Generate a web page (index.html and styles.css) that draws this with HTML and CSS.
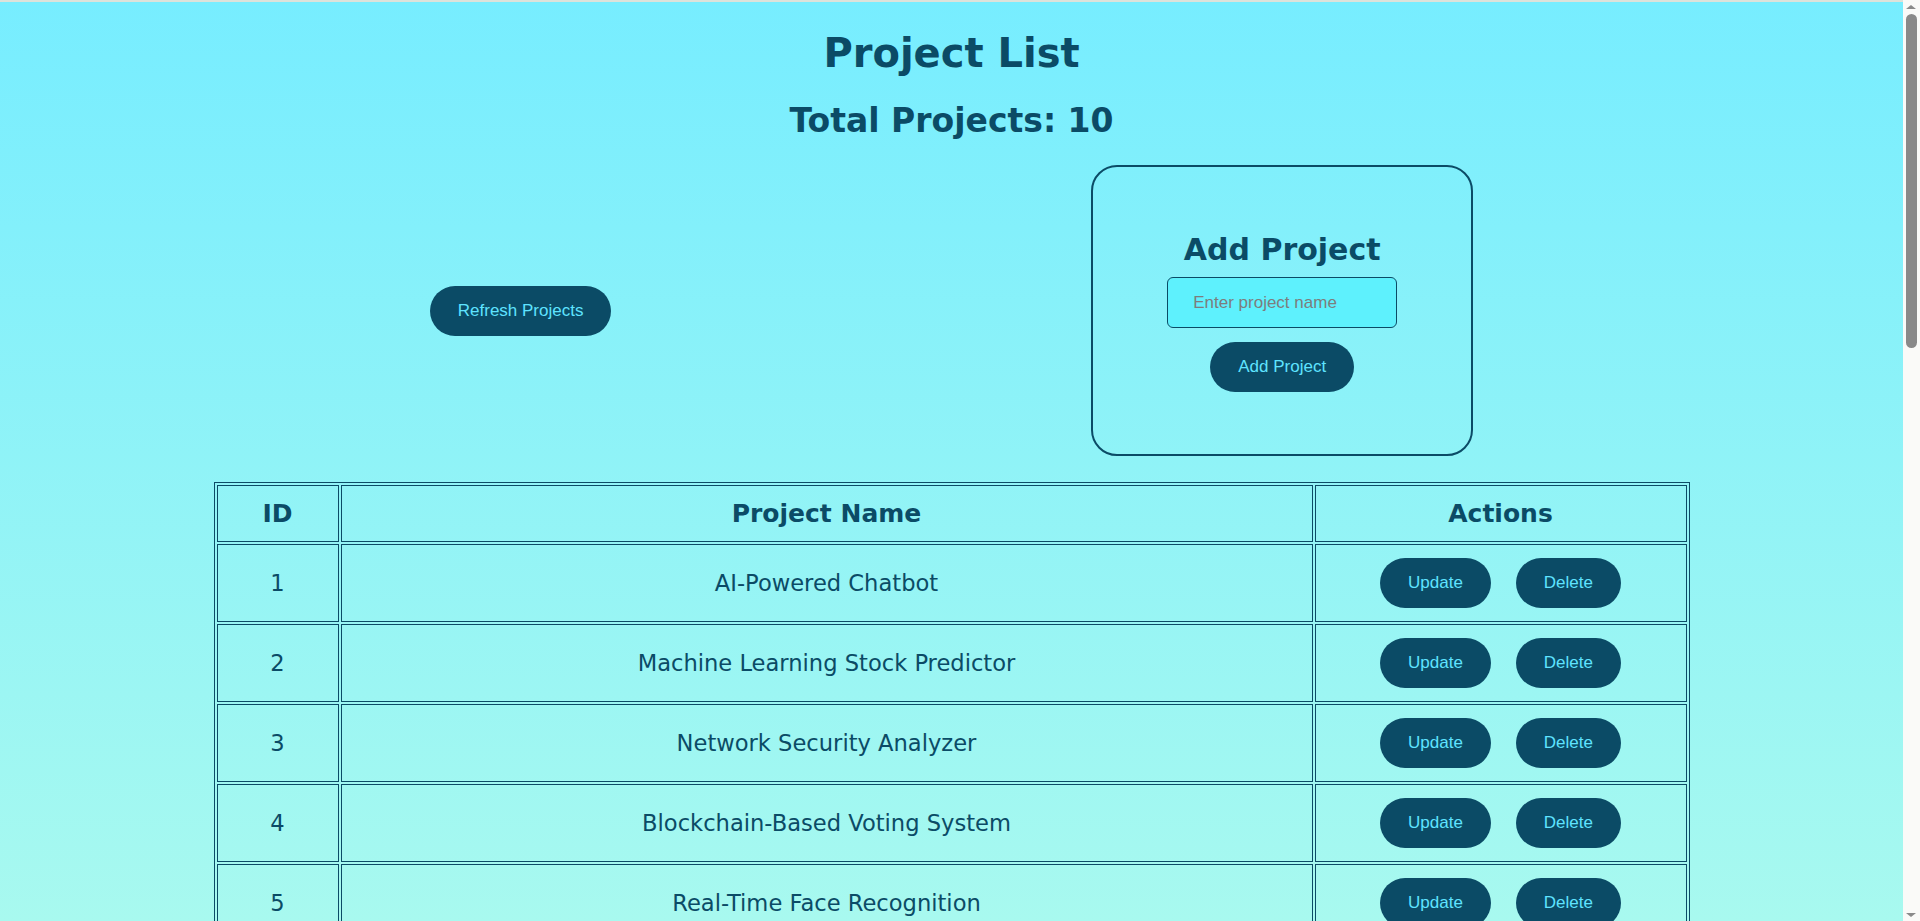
FILE: index.html
```html
<!DOCTYPE html>
<html lang="en">
<head>
<meta charset="utf-8">
<title>Project List</title>
<link rel="stylesheet" href="styles.css">
</head>
<body>
<div class="page">
  <h1 class="title">Project List</h1>
  <h2 class="total">Total Projects: 10</h2>

  <div class="toolbar">
    <button class="btn">Refresh Projects</button>
    <div class="card">
      <h2 class="card-title">Add Project</h2>
      <input class="text-input" type="text" placeholder="Enter project name">
      <button class="btn">Add Project</button>
    </div>
  </div>

  <table class="projects">
    <colgroup>
      <col class="col-id">
      <col class="col-name">
      <col class="col-actions">
    </colgroup>
    <thead>
      <tr><th>ID</th><th>Project Name</th><th>Actions</th></tr>
    </thead>
    <tbody>
      <tr><td>1</td><td>AI-Powered Chatbot</td><td><div class="actions"><button class="btn">Update</button><button class="btn">Delete</button></div></td></tr>
      <tr><td>2</td><td>Machine Learning Stock Predictor</td><td><div class="actions"><button class="btn">Update</button><button class="btn">Delete</button></div></td></tr>
      <tr><td>3</td><td>Network Security Analyzer</td><td><div class="actions"><button class="btn">Update</button><button class="btn">Delete</button></div></td></tr>
      <tr><td>4</td><td>Blockchain-Based Voting System</td><td><div class="actions"><button class="btn">Update</button><button class="btn">Delete</button></div></td></tr>
      <tr><td>5</td><td>Real-Time Face Recognition</td><td><div class="actions"><button class="btn">Update</button><button class="btn">Delete</button></div></td></tr>
      <tr><td>6</td><td>Smart Home Automation</td><td><div class="actions"><button class="btn">Update</button><button class="btn">Delete</button></div></td></tr>
      <tr><td>7</td><td>E-Commerce Recommendation Engine</td><td><div class="actions"><button class="btn">Update</button><button class="btn">Delete</button></div></td></tr>
      <tr><td>8</td><td>Cloud Storage Manager</td><td><div class="actions"><button class="btn">Update</button><button class="btn">Delete</button></div></td></tr>
      <tr><td>9</td><td>Sentiment Analysis Tool</td><td><div class="actions"><button class="btn">Update</button><button class="btn">Delete</button></div></td></tr>
      <tr><td>10</td><td>IoT Weather Station</td><td><div class="actions"><button class="btn">Update</button><button class="btn">Delete</button></div></td></tr>
    </tbody>
  </table>
</div>

<div class="scrollbar" aria-hidden="true">
  <span class="arrow arrow-up"></span>
  <span class="thumb"></span>
  <span class="arrow arrow-down"></span>
</div>
</body>
</html>
```
FILE: styles.css
```css
html {
  background: linear-gradient(to bottom, #77edff 0%, #a8f9ef 100%) fixed;
  min-height: 100%;
}

body {
  margin: 0;
  font-family: "DejaVu Sans", Verdana, sans-serif;
  color: #0b4b66;
}

body::before {
  content: "";
  position: fixed;
  top: 0;
  left: 0;
  right: 0;
  height: 2px;
  background: #dde2da;
  z-index: 2;
}

.page {
  width: 1903px;
  padding: 30px 0 1093px;
}

.title {
  margin: 0;
  font-size: 40px;
  font-weight: bold;
  text-align: center;
}

.total {
  margin: 25px 0 0;
  font-size: 33px;
  font-weight: bold;
  text-align: center;
}

.toolbar {
  margin-top: 25px;
  display: flex;
  align-items: center;
  justify-content: space-evenly;
  gap: 50px;
}

.btn {
  font-family: "Liberation Sans", Arial, sans-serif;
  font-size: 17px;
  line-height: 20px;
  padding: 15px 28px;
  border: none;
  border-radius: 25px;
  background: #0b4b66;
  color: #5fe3ff;
  cursor: pointer;
}

.card {
  width: 382px;
  box-sizing: border-box;
  border: 2px solid #0b4b66;
  border-radius: 26px;
  padding: 65px 20px 62px;
  display: flex;
  flex-direction: column;
  align-items: center;
}

.card-title {
  margin: 0 0 10px;
  font-size: 30px;
  font-weight: bold;
}

.text-input {
  width: 230px;
  height: 51px;
  box-sizing: border-box;
  padding: 0 25px;
  margin: 0 0 14px;
  border: 1px solid #0b4b66;
  border-radius: 6px;
  background: #5ef1fd;
  font-family: "Liberation Sans", Arial, sans-serif;
  font-size: 17px;
  color: #0b4b66;
}

.text-input::placeholder {
  color: #7d7d7d;
}

.projects {
  margin: 26px auto 0;
  width: 1476px;
  table-layout: fixed;
  border: 1px solid #0b4b66;
  border-spacing: 2px;
}

.col-id {
  width: 122px;
}

.col-actions {
  width: 372px;
}

.projects th,
.projects td {
  border: 1px solid #0b4b66;
  padding: 13px;
  text-align: center;
  vertical-align: middle;
}

.projects th {
  font-size: 25px;
  font-weight: bold;
}

.projects td {
  font-size: 22.6px;
}

.actions {
  display: flex;
  justify-content: center;
  gap: 25px;
}

.scrollbar {
  position: fixed;
  top: 0;
  right: 0;
  bottom: 0;
  width: 17px;
  background: #fafaf8;
  z-index: 3;
}

.thumb {
  position: absolute;
  left: 3px;
  top: 14px;
  width: 11px;
  height: 334px;
  border-radius: 6px;
  background: #898989;
}

.arrow {
  position: absolute;
  left: 3px;
  width: 0;
  height: 0;
  border-left: 5.5px solid transparent;
  border-right: 5.5px solid transparent;
}

.arrow-up {
  top: 5px;
  border-bottom: 4px solid #8a8a8a;
}

.arrow-down {
  bottom: 4px;
  border-top: 4px solid #8a8a8a;
}
```
